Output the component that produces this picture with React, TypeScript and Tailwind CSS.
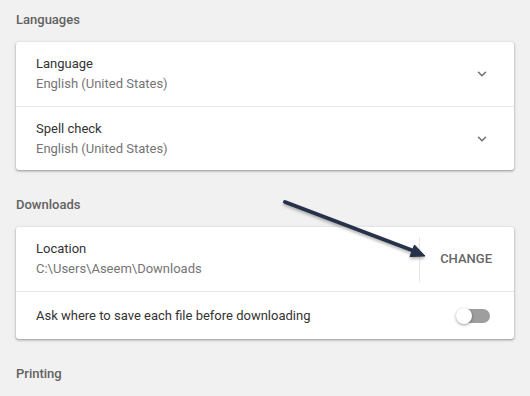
import { ChevronDown } from "lucide-react";

function SectionTitle({ children }: { children: string }) {
  return (
    <h2 className="h-5 leading-5 text-[13px] font-medium text-[#616161]">{children}</h2>
  );
}

function Card({ children }: { children: React.ReactNode }) {
  return (
    <div className="mt-3 rounded-[3px] bg-white shadow-[0_1px_2px_rgba(0,0,0,0.28),0_1px_3px_1px_rgba(0,0,0,0.1)]">
      {children}
    </div>
  );
}

function DropdownRow({ label, value, first }: { label: string; value: string; first?: boolean }) {
  return (
    <div className={`flex h-16 items-center pl-5 pr-[25px] ${first ? "" : "border-t border-[#e6e6e6]"}`}>
      <div className="flex-1 leading-5">
        <div className="text-[#333]">{label}</div>
        <div className="text-[#757575]">{value}</div>
      </div>
      <ChevronDown className="h-[14px] w-[14px] text-[#6f6f6f]" strokeWidth={2.5} />
    </div>
  );
}

function Toggle() {
  return (
    <div className="relative h-4 w-[34px]">
      <div className="absolute left-[6px] top-[1px] h-[14px] w-[28px] rounded-full bg-[#9e9e9e]" />
      <div className="absolute left-0 top-0 h-4 w-4 rounded-full bg-white shadow-[0_1px_3px_rgba(0,0,0,0.4)]" />
    </div>
  );
}

export default function App() {
  return (
    <div
      className="relative h-[396px] w-[530px] overflow-hidden bg-[#f1f1f1] px-4 pt-[10px] text-[13px]"
      style={{ fontFamily: "Roboto, 'Liberation Sans', sans-serif" }}
    >
      <SectionTitle>Languages</SectionTitle>
      <Card>
        <DropdownRow first label="Language" value="English (United States)" />
        <DropdownRow label="Spell check" value="English (United States)" />
      </Card>

      <div className="mt-[25px]">
        <SectionTitle>Downloads</SectionTitle>
      </div>
      <Card>
        <div className="flex h-16 items-center pl-5 pr-5">
          <div className="flex-1 leading-5">
            <div className="text-[#333]">Location</div>
            <div className="text-[#757575]">C:\Users\Aseem\Downloads</div>
          </div>
          <div className="h-[45px] w-px bg-[#e6e6e6]" />
          <button className="ml-[20px] mr-[2px] font-medium uppercase text-[#666]">Change</button>
        </div>
        <div className="flex h-12 items-center border-t border-[#e6e6e6] pl-5 pr-[24px]">
          <div className="flex-1 text-[#333]">Ask where to save each file before downloading</div>
          <Toggle />
        </div>
      </Card>

      <div className="mt-[25px]">
        <SectionTitle>Printing</SectionTitle>
      </div>

      <svg className="pointer-events-none absolute left-0 top-0" width="530" height="396">
        <defs>
          <filter id="sh" x="-10%" y="-10%" width="120%" height="140%">
            <feDropShadow dx="0" dy="2" stdDeviation="1.5" floodColor="#000" floodOpacity="0.3" />
          </filter>
        </defs>
        <g filter="url(#sh)" fill="#283048" stroke="#283048">
          <line x1="285" y1="202" x2="414" y2="251" strokeWidth="4" strokeLinecap="round" />
          <polygon points="425,256 410,256.5 414.5,245" strokeWidth="1" strokeLinejoin="round" />
        </g>
      </svg>
    </div>
  );
}
